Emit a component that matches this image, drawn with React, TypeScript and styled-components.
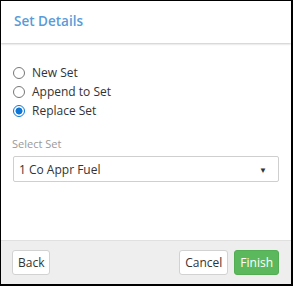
import React, { useState } from "react";
import styled, { createGlobalStyle } from "styled-components";

const Global = createGlobalStyle`
  html, body { margin: 0; padding: 0; background: #fff; }
  * { box-sizing: border-box; }
`;

const Dialog = styled.div`
  width: 293px;
  height: 286px;
  border-style: solid;
  border-color: #000;
  border-width: 1px 2px 2px 1px;
  display: flex;
  flex-direction: column;
  font-family: "Open Sans", "Noto Sans", sans-serif;
  color: #333;
  background: #fff;
  overflow: hidden;
`;

const Header = styled.div`
  height: 42px;
  flex: none;
  display: flex;
  align-items: center;
  padding: 0 13px 2px;
  box-shadow: 0 1px 2px rgba(0, 0, 0, 0.22);
  position: relative;
  z-index: 1;
`;

const Title = styled.h1`
  margin: 0;
  font-size: 13.5px;
  font-weight: 600;
  color: #5a9bd8;
`;

const Body = styled.div`
  flex: 1;
  padding: 20px 12px 0 11px;
  display: flex;
  flex-direction: column;
`;

const RadioGroup = styled.div`
  display: flex;
  flex-direction: column;
`;

const RadioRow = styled.label`
  display: flex;
  align-items: center;
  height: 19px;
  font-size: 12px;
  color: #333;
  gap: 7px;
  cursor: pointer;
`;

const Radio = styled.input.attrs({ type: "radio" })`
  appearance: none;
  margin: 0 0 0 1px;
  width: 12px;
  height: 12px;
  border-radius: 50%;
  border: 1px solid #777;
  background: #fff;
  &:checked {
    border-color: #0b76d6;
    background: radial-gradient(circle, #0b76d6 0 3.2px, #fff 3.8px);
  }
`;

const FieldLabel = styled.div`
  margin-top: 16px;
  font-size: 11px;
  color: #9a9a9a;
  height: 15px;
`;

const SelectBox = styled.div`
  margin-top: 5px;
  margin-left: 1px;
  height: 26px;
  border: 1px solid #cfcfcf;
  border-radius: 2px;
  display: flex;
  align-items: center;
  justify-content: space-between;
  padding: 0 11px 0 5px;
  font-size: 12px;
  color: #333;
`;

const Caret = styled.span`
  font-size: 8px;
  color: #333;
`;

const Footer = styled.div`
  height: 44px;
  flex: none;
  background: #eee;
  border-top: 1px solid #e0e0e0;
  display: flex;
  align-items: center;
  padding: 0 12px 0 11px;
  gap: 6px;
`;

const Spacer = styled.div`
  flex: 1;
`;

const Button = styled.button<{ $primary?: boolean }>`
  height: 25px;
  padding: 0 5px;
  border-radius: 3px;
  font-family: inherit;
  font-size: 12px;
  border: 1px solid ${(p) => (p.$primary ? "#53ad53" : "#d2d2d2")};
  background: ${(p) => (p.$primary ? "#5cb85c" : "#fff")};
  color: ${(p) => (p.$primary ? "#fff" : "#333")};
  cursor: pointer;
`;

export default function App() {
  const [choice, setChoice] = useState("replace");
  const options = [
    { id: "new", label: "New Set" },
    { id: "append", label: "Append to Set" },
    { id: "replace", label: "Replace Set" },
  ];
  return (
    <>
      <Global />
      <Dialog>
        <Header>
          <Title>Set Details</Title>
        </Header>
        <Body>
          <RadioGroup>
            {options.map((o) => (
              <RadioRow key={o.id}>
                <Radio
                  name="mode"
                  checked={choice === o.id}
                  onChange={() => setChoice(o.id)}
                />
                {o.label}
              </RadioRow>
            ))}
          </RadioGroup>
          <FieldLabel>Select Set</FieldLabel>
          <SelectBox>
            <span>1 Co Appr Fuel</span>
            <Caret>▼</Caret>
          </SelectBox>
        </Body>
        <Footer>
          <Button>Back</Button>
          <Spacer />
          <Button>Cancel</Button>
          <Button $primary>Finish</Button>
        </Footer>
      </Dialog>
    </>
  );
}
